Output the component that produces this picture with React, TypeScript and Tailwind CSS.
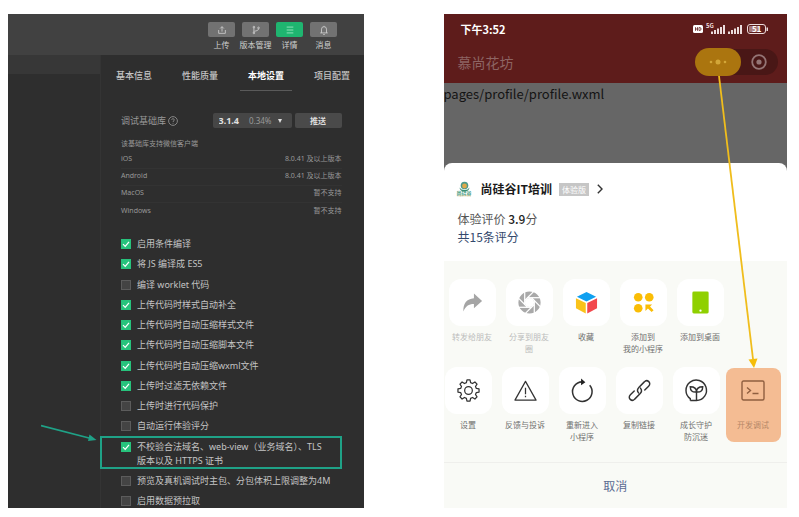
import type { ReactNode } from 'react';

const toolbar = [
  { label: '上传', active: false, icon: <path d="M2 6v4h8V6M6 8V2M3.8 4.2 6 2l2.2 2.2" /> },
  {
    label: '版本管理',
    active: false,
    icon: (
      <>
        <path d="M3.500 3v6M9 4.500C9 6.500 7 7 4 7.500" />
        <circle cx="3.500" cy="2.500" r="1" />
        <circle cx="3.500" cy="9.500" r="1" />
        <circle cx="9" cy="3.500" r="1" />
      </>
    ),
  },
  { label: '详情', active: true, icon: <path d="M2 2.500h8M2 6h8M2 9.500h8" /> },
  { label: '消息', active: false, icon: <path d="M1.500 9.500h9M3 9.500V5a3 3 0 0 1 6 0V9.500M5 11.300h2M6 1v1" /> },
];

const tabs = ['基本信息', '性能质量', '本地设置', '项目配置'];

const support = [
  ['iOS', '8.0.41 及以上版本'],
  ['Android', '8.0.41 及以上版本'],
  ['MacOS', '暂不支持'],
  ['Windows', '暂不支持'],
];

const settings: { text: ReactNode; on: boolean; marked?: boolean }[] = [
  { text: '启用条件编译', on: true },
  { text: '将 JS 编译成 ES5', on: true },
  { text: '编译 worklet 代码', on: false },
  { text: '上传代码时样式自动补全', on: true },
  { text: '上传代码时自动压缩样式文件', on: true },
  { text: '上传代码时自动压缩脚本文件', on: true },
  { text: '上传代码时自动压缩wxml文件', on: true },
  { text: '上传时过滤无依赖文件', on: true },
  { text: '上传时进行代码保护', on: false },
  { text: '自动运行体验评分', on: false },
  {
    text: (
      <>
        不校验合法域名、web-view（业务域名）、TLS
        <br />
        版本以及 HTTPS 证书
      </>
    ),
    on: true,
    marked: true,
  },
  { text: '预览及真机调试时主包、分包体积上限调整为4M', on: false },
  { text: '启用数据预拉取', on: false },
];

function Setting({ text, on, marked }: { text: ReactNode; on: boolean; marked?: boolean }) {
  return (
    <li className="relative">
      <label className="flex gap-1.5 whitespace-nowrap">
        <span className="relative mt-0.5 size-[10px] shrink-0">
          <input
            type="checkbox"
            defaultChecked={on}
            className="peer block size-[10px] appearance-none border border-[#5c5c5c] bg-[#444] checked:border-[#27c27c] checked:bg-[#27c27c]"
          />
          <svg
            viewBox="0 0 10 10"
            className="pointer-events-none absolute inset-0 hidden size-[10px] fill-none stroke-white peer-checked:block"
          >
            <path d="M2 5.200 4.200 7.400 8 2.800" strokeWidth="1.200" />
          </svg>
        </span>
        <span>{text}</span>
      </label>
      {marked && (
        <>
          <div className="pointer-events-none absolute -top-1 right-0 -bottom-px -left-[21px] border-2 border-[#1fa287]" />
          <svg viewBox="0 0 56 18" className="absolute right-full -top-4 mr-6 h-[18px] w-14" fill="#1fa287">
            <path d="M0 1.500 48 14" stroke="#1fa287" strokeWidth="1.800" />
            <path d="M48.500 10.500 55.500 16 47 17Z" />
          </svg>
        </>
      )}
    </li>
  );
}

function DevTools() {
  return (
    <section className="overflow-hidden bg-[#2e2e2e] font-['Noto_Sans','Noto_Sans_CJK_SC',sans-serif] text-[#c4c4c4]">
      <header className="flex h-[41px] justify-end bg-[#414141] pt-2 pr-[23px]">
        {toolbar.map((t) => (
          <button key={t.label} className="flex w-[34px] flex-col items-center">
            <span
              className={
                t.active
                  ? 'flex h-[15px] w-[27px] items-center justify-center rounded-xs bg-[#1fb570] text-[#a5e8c8]'
                  : 'flex h-[15px] w-[27px] items-center justify-center rounded-xs bg-[#727272] text-[#d0d0d0]'
              }
            >
              <svg viewBox="0 0 12 12" className="size-[10px] fill-none stroke-current">
                {t.icon}
              </svg>
            </span>
            <span className="mt-0.5 text-[8px] leading-3 whitespace-nowrap text-[#d0d0d0]">{t.label}</span>
          </button>
        ))}
      </header>
      <div className="flex">
        <aside className="w-[93px] shrink-0 border-r border-[#343434]">
          <div className="h-[19px] bg-[#373737]" />
        </aside>
        <div className="min-w-0 grow">
          <nav className="flex">
            {tabs.map((t) => (
              <button
                key={t}
                className={
                  t === '本地设置'
                    ? 'flex w-[66px] shrink-0 flex-col items-center pt-3.5 text-[9px] leading-[14px] font-bold text-white'
                    : 'flex w-[66px] shrink-0 flex-col items-center pt-3.5 text-[9px] leading-[14px] font-medium'
                }
              >
                {t}
                <span className={t === '本地设置' ? 'mt-[7px] h-px w-[52px] bg-[#5a5a5a]' : 'mt-[7px] h-px'} />
              </button>
            ))}
          </nav>
          <div className="pr-[22px] pl-5">
            <div className="mt-[22px] flex h-[15px] items-center text-[9px] leading-[14px]">
              <label htmlFor="lib" className="text-[#999]">
                调试基础库
              </label>
              <svg viewBox="0 0 10 10" className="ml-0.5 size-[10px] fill-none stroke-[#999]" strokeWidth="0.800">
                <circle cx="5" cy="5" r="4.400" />
                <path d="M3.700 4c0-1.800 2.600-1.600 2.600-.1C6.300 4.900 5 4.900 5 6M5 6.900v.8" />
              </svg>
              <div className="relative ml-auto h-[15px] w-[79px] rounded-xs bg-[#464646]">
                <select
                  id="lib"
                  className="block h-[15px] w-full appearance-none bg-transparent pl-1.5 font-bold text-[#e0e0e0]"
                >
                  <option>3.1.4</option>
                </select>
                <span className="pointer-events-none absolute inset-y-0 right-2.5 flex items-center gap-1.5 text-[8px] text-[#999]">
                  0.34%
                  <svg viewBox="0 0 4 4" className="size-1 fill-[#e0e0e0]">
                    <path d="M0 0h4L2 4Z" />
                  </svg>
                </span>
              </div>
              <button className="ml-[3px] h-[15px] w-[47px] rounded-xs bg-[#4a4a4a] text-[8px] font-bold text-[#ddd]">
                推送
              </button>
            </div>
            <p className="mt-[9px] text-[7px] leading-[14px] text-[#999]">该基础库支持微信客户端</p>
            <table className="w-full text-[7px] text-[#999]">
              <tbody>
                {support.map(([os, v]) => (
                  <tr key={os} className="h-[17px] border-b border-[#333] last:border-0">
                    <td>{os}</td>
                    <td className="text-right">{v}</td>
                  </tr>
                ))}
              </tbody>
            </table>
            <ul className="mt-[18px] flex h-[271px] flex-col justify-between text-[9px] leading-[14px]">
              {settings.map((s, i) => (
                <Setting key={i} {...s} />
              ))}
            </ul>
          </div>
        </div>
      </div>
    </section>
  );
}

const line = { fill: 'none', stroke: '#333', strokeWidth: 1.3 };

const actionsTop: { label: ReactNode; id: string; dim?: boolean; icon: ReactNode }[] = [
  {
    id: 'share',
    label: '转发给朋友',
    dim: true,
    icon: <path d="M2.500 21.500C2 13 6 8 13.500 7.500V2.500L22 10.500 13.500 18V13.500C8 13.500 4.500 16 2.500 21.500Z" fill="#a5a5a5" />,
  },
  {
    id: 'moments',
    label: '分享到朋友圈',
    dim: true,
    icon: (
      <>
        <circle cx="12" cy="12" r="8.200" fill="none" stroke="#a9a9a9" strokeWidth="6.800" />
        {[0, 45, 90, 135, 180, 225, 270, 315].map((a) => (
          <path key={a} d="M10 7H23" stroke="#fff" strokeWidth="1.300" transform={`rotate(${a} 12 12)`} />
        ))}
      </>
    ),
  },
  {
    id: 'favorite',
    label: '收藏',
    icon: (
      <>
        <path d="M12 1 22 6 12 11 2 6Z" fill="#10a0f0" />
        <path d="M1 7.500 11.200 12.500V23.500L1 18Z" fill="#fac31a" />
        <path d="M23 7.500 12.800 12.500V23.500L23 18Z" fill="#f2484d" />
      </>
    ),
  },
  {
    id: 'mine',
    label: (
      <>
        添加到
        <br />
        我的小程序
      </>
    ),
    icon: (
      <g fill="#fabd05">
        <circle cx="6.500" cy="6.500" r="4.500" />
        <circle cx="18" cy="6.500" r="4.500" />
        <circle cx="6.500" cy="18" r="4.500" />
        <path d="M14 14H21L18.800 16.200 22.500 20.200 20.500 22 16.600 18.200 14 20.800Z" />
      </g>
    ),
  },
  {
    id: 'desktop',
    label: '添加到桌面',
    icon: (
      <>
        <rect x="3.500" y="0.500" width="17" height="23" rx="1.500" fill="#8fd000" />
        <circle cx="12" cy="20.500" r="1.200" fill="#fff" />
      </>
    ),
  },
];

const actionsBottom: { label: ReactNode; id: string; icon: ReactNode }[] = [
  {
    id: 'settings',
    label: '设置',
    icon: (
      <g {...line} strokeLinejoin="round">
        <circle cx="12" cy="12" r="4" />
        <path d="M10.400 1h3.200l.6 2.800 2 .9 2.500-1.600 2.200 2.200-1.600 2.500.9 2 2.800.6v3.200l-2.800.6-.9 2 1.600 2.500-2.200 2.200-2.500-1.600-2 .9-.6 2.800h-3.200l-.6-2.800-2-.9-2.500 1.600-2.200-2.200 1.600-2.500-.9-2L1 13.600v-3.200l2.800-.6.9-2-1.600-2.500 2.200-2.200 2.500 1.600 2-.9Z" />
      </g>
    ),
  },
  {
    id: 'feedback',
    label: '反馈与投诉',
    icon: (
      <g {...line} strokeLinejoin="round">
        <path d="M12 2.500 23 22H1ZM12 9v7M12 17.500V19" />
      </g>
    ),
  },
  {
    id: 'restart',
    label: (
      <>
        重新进入
        <br />
        小程序
      </>
    ),
    icon: (
      <>
        <path d="M19.500 6.500A10.200 10.200 0 1 1 11.500 3" {...line} strokeWidth={1.6} />
        <path d="M10.500-.5 15 3.300 10.500 6.500Z" fill="#222" />
      </>
    ),
  },
  {
    id: 'copy',
    label: '复制链接',
    icon: (
      <g {...line} strokeWidth={1.5} strokeLinecap="round">
        <path d="M11 14.500C9 12 10 10 11.500 8.500L17 3C20-.2 25 4 21.500 7.500L17.500 11.500" />
        <path d="M13 9.500C15 12 14 14 12.500 15.500L7 21C4 24.200-1 20 2.500 16.500L6.500 12.500" />
      </g>
    ),
  },
  {
    id: 'guard',
    label: (
      <>
        成长守护
        <br />
        防沉迷
      </>
    ),
    icon: (
      <g {...line} strokeWidth={1.5}>
        <path d="M5.500 22.500V20.500A10.700 10.700 0 1 1 12 22.500H5.500" />
        <path d="M12 22V13.500M12 13.500C7.500 14 5.500 12 5.500 8 9.500 8 12 9.500 12 13.500ZM12 13.500C16.500 14 18.500 12 18.500 8 14.500 8 12 9.500 12 13.500Z" />
      </g>
    ),
  },
];

function Action({ label, icon, dim }: { label: ReactNode; icon: ReactNode; dim?: boolean }) {
  return (
    <button className="flex w-[47px] shrink-0 flex-col items-center">
      <span className="flex size-[47px] items-center justify-center rounded-xl bg-white">
        <svg viewBox="0 0 24 24" className="size-[23px] overflow-visible">
          {icon}
        </svg>
      </span>
      <span
        className={
          dim ? 'mt-[5px] text-[8px] leading-3 text-[#bcbcbc]' : 'mt-[5px] text-[8px] leading-3 text-[#707070]'
        }
      >
        {label}
      </span>
    </button>
  );
}

function StatusIcons() {
  return (
    <svg viewBox="0 -2 76 16" className="h-4 w-[76px] overflow-visible" fill="#ecdcdc">
      <rect x="0" y="2" width="10" height="8" rx="1.500" fill="#fff" />
      <path
        d="M2.500 4.200v3.600M4.500 4.200v3.600M2.500 6h2M6 4.500h.8q1.200 0 1.200 1.500T6.800 7.500H6Z"
        stroke="#5e1c1b"
        strokeWidth="0.800"
        fill="none"
      />
      <text x="13" y="5" fontSize="6" fontWeight="700">
        5G
      </text>
      <path d="M18 8.500h2V11h-2zM21 7h2v4h-2zM24 5.500h2V11h-2zM27 4h2v7h-2zM30 2h2v9h-2zM35 8.500h2V11h-2zM38 7h2v4h-2zM41 5.500h2V11h-2zM44 4h2v7h-2zM47 2h2v9h-2z" />
      <rect x="54.500" y="1.500" width="18" height="9" rx="2.500" fill="none" stroke="#ecdcdc" />
      <rect x="56" y="3" width="10" height="6" rx="1" fill="#a87a7a" />
      <path d="M73.500 4.500h1.500v3.500h-1.500z" />
      <text x="59" y="9" fontSize="8" fontWeight="700" fill="#fff">
        51
      </text>
    </svg>
  );
}

function Phone() {
  return (
    <section className="relative overflow-hidden bg-[#666] font-['Noto_Sans_CJK_SC',sans-serif]">
      <header className="h-[69px] bg-[#5e1c1b]">
        <div className="flex items-center justify-between pt-[7px] pr-[18px] pl-[17px] text-[11px] leading-4 font-bold text-white">
          <span>下午3:52</span>
          <StatusIcons />
        </div>
        <div className="mt-3 flex items-center justify-between pr-[9px] pl-3.5">
          <h1 className="text-[14px] leading-5 text-[#8d6463]">慕尚花坊</h1>
          <div className="flex h-[26px] w-[83px] items-center rounded-full bg-[#491716]">
            <button
              aria-label="更多"
              className="flex h-7 w-[46px] shrink-0 items-center justify-center rounded-full bg-[#ab750f]"
            >
              <svg viewBox="0 0 18 6" className="h-1.5 w-[18px] fill-[#d3a638]">
                <circle cx="2" cy="3" r="1.300" />
                <circle cx="9" cy="3" r="2.500" />
                <circle cx="16" cy="3" r="1.300" />
              </svg>
            </button>
            <button aria-label="关闭" className="ml-2.5">
              <svg viewBox="0 0 16 16" className="size-4 fill-none stroke-[#947575]" strokeWidth="1.800">
                <circle cx="8" cy="8" r="6.800" />
                <circle cx="8" cy="8" r="2.600" className="fill-[#947575] stroke-none" />
              </svg>
            </button>
          </div>
        </div>
      </header>
      <p className="h-20 text-[13px] leading-[22px] text-[#141414]">pages/profile/profile.wxml</p>
      <div className="rounded-t-lg bg-white">
        <div className="h-[98px] pt-[17px] pl-3">
          <div className="flex items-center">
            <svg viewBox="0 0 18 16" className="h-4 w-[18px]">
              <circle cx="8.500" cy="4.500" r="3.800" fill="#4b9a8a" />
              <circle cx="8.500" cy="5" r="2.400" fill="#e0a94a" />
              <path d="M3.500 6.500Q5 9 8.500 9T13.500 6.500Q13 10.500 8.500 10.500T3.500 6.500Z" fill="#3c8f74" />
              <text x="0.500" y="13.500" fontSize="5" fontWeight="700" fill="#3f987c">
                尚硅谷
              </text>
              <path d="M2 14.800h13" stroke="#d9c99a" strokeWidth="0.800" />
            </svg>
            <h2 className="ml-[7px] text-[12px] leading-[18px] font-bold text-[#1a1a1a]">尚硅谷IT培训</h2>
            <span className="ml-[7px] h-[13px] bg-[#c6c6c6] px-[3px] text-[8px] leading-[13px] text-white">体验版</span>
            <svg viewBox="0 0 6 10" className="ml-2 h-2.5 w-1.5 fill-none stroke-[#333]" strokeWidth="1.400">
              <path d="M.8.800 5 5 .8 9.200" />
            </svg>
          </div>
          <p className="mt-3 ml-0.5 text-[12px] leading-[18px] text-[#555]">
            体验评价 <span className="font-medium text-[#222]">3.9</span>分
          </p>
          <a href="#reviews" className="ml-0.5 block text-[12px] leading-[18px] text-[#33486c]">
            共15条评分
          </a>
        </div>
        <div className="bg-[#f9faf6]">
          <div className="flex gap-2.5 pt-[18px] pl-[5px]">
            {actionsTop.map(({ id, ...a }) => (
              <Action key={id} {...a} />
            ))}
          </div>
          <div className="mt-3 flex h-[95px] gap-2.5 pl-px">
            {actionsBottom.map(({ id, ...a }) => (
              <Action key={id} {...a} />
            ))}
            <button className="-ml-1 mt-px flex h-[74px] w-[55px] shrink-0 flex-col items-center rounded-lg bg-[#f4bc93] pt-3">
              <svg viewBox="0 0 24 22" className="h-[22px] w-6 fill-none stroke-[#8f5f40]" strokeWidth="1.400">
                <rect x="1" y="1" width="22" height="19" rx="1.500" />
                <path d="M6 7.500 9.500 10.500 6 13.500M11.500 13.500H17.500" />
              </svg>
              <span className="mt-[17px] text-[8px] leading-3 text-[#b58767]">开发调试</span>
            </button>
          </div>
          <button className="block h-[46px] w-full border-t border-[#efefec] text-[12px] text-[#5b6b92]">取消</button>
        </div>
      </div>
      <svg viewBox="0 0 42 292" className="pointer-events-none absolute top-[62px] right-[28px] h-[292px] w-[42px]">
        <path d="M2 0 36 283" stroke="#f0bd1c" strokeWidth="1.800" />
        <path d="M31.500 283.500 40.500 282.500 37 292Z" fill="#f5bd0a" />
      </svg>
    </section>
  );
}

export default function App() {
  return (
    <main className="grid grid-cols-[355fr_343fr] items-start gap-20 bg-white pt-3.5 pr-3 pb-2 pl-2">
      <DevTools />
      <Phone />
    </main>
  );
}
